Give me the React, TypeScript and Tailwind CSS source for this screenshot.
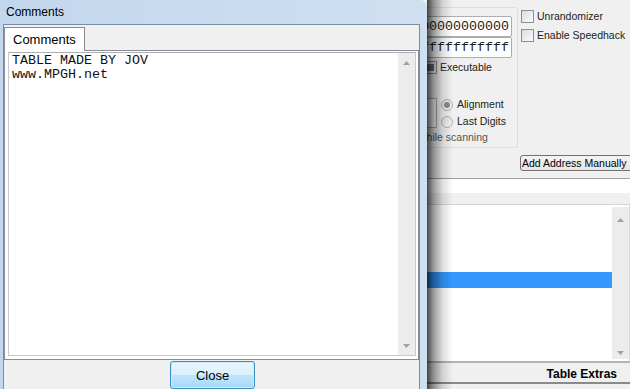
import React from "react";

function Arrow({ down }: { down?: boolean }) {
  return (
    <svg width="7" height="4" viewBox="0 0 7 4" className="block">
      <polygon points={down ? "0,0 7,0 3.5,4" : "0,4 7,4 3.5,0"} fill="#a2a2a2" />
    </svg>
  );
}

function CheckBox({ gray }: { gray?: boolean }) {
  return (
    <div className="w-[13px] h-[13px] shrink-0 border border-[#8f8f8f] bg-[linear-gradient(135deg,#dcdcdc,#fbfbfb)] flex items-center justify-center">
      {gray ? <div className="w-[7px] h-[7px] bg-[#6f6f6f]" /> : null}
    </div>
  );
}

function Radio({ checked }: { checked?: boolean }) {
  return (
    <div className="w-[12px] h-[12px] shrink-0 rounded-full border border-[#b0b0b0] bg-[linear-gradient(135deg,#e2e2e2,#fafafa)] flex items-center justify-center">
      {checked ? <div className="w-[6px] h-[6px] rounded-full bg-[#8c8c8c]" /> : null}
    </div>
  );
}

export default function App() {
  return (
    <div className="relative w-[630px] h-[389px] overflow-hidden bg-[#f0f0f0] font-['Liberation_Sans',Arial,sans-serif] text-black">
      {/* Background main window */}
      <div className="flex flex-col w-[630px] h-[389px]">
        <div className="h-[178px] flex shrink-0">
          <div className="w-[518px] shrink-0 pl-[380px] pt-[7px]">
            <div className="h-[141px] border border-[#d5dfe5] rounded-[3px] flex flex-col">
              <div className="mt-[8px] self-end mr-[5px] w-[120px] h-[21px] border border-[#abadb3] rounded-[2px] bg-white flex items-center justify-end pr-[2px] overflow-hidden font-['Liberation_Mono',monospace] text-[13.33px] leading-[13px] text-[#222]">
                <span className="whitespace-nowrap">0000000000000000</span>
              </div>
              <div className="self-end mr-[5px] w-[120px] h-[21px] border border-[#abadb3] rounded-[2px] bg-white flex items-center justify-end pr-[2px] overflow-hidden font-['Liberation_Mono',monospace] text-[13.33px] leading-[13px] text-[#222]">
                <span className="whitespace-nowrap">7fffffffffffffff</span>
              </div>
              <div className="mt-[3px] h-[13px] flex items-center pl-[43px] gap-[3px] text-[10.5px] leading-[13px] text-[#222]">
                <CheckBox gray />
                <span className="whitespace-nowrap">Executable</span>
              </div>
              <div className="mt-[22px] flex">
                <div className="ml-[19px] mt-[2px] w-[37px] h-[30px] border border-[#abadb3] bg-white" />
                <div className="ml-[4px] flex flex-col text-[10.5px] leading-[13px] text-[#222]">
                  <div className="h-[17px] flex items-center gap-[4px]">
                    <Radio checked />
                    <span className="whitespace-nowrap">Alignment</span>
                  </div>
                  <div className="h-[17px] flex items-center gap-[4px]">
                    <Radio />
                    <span className="whitespace-nowrap">Last Digits</span>
                  </div>
                </div>
              </div>
              <div className="ml-[38px] mt-[1px] text-[10.5px] leading-[13px] text-[#555] whitespace-nowrap">while scanning</div>
            </div>
          </div>
          <div className="flex-1 flex flex-col pl-[3px] pt-[10px] text-[10.5px] leading-[13px] text-[#222]">
            <div className="h-[13px] flex items-center gap-[3px]">
              <CheckBox />
              <span className="whitespace-nowrap">Unrandomizer</span>
            </div>
            <div className="mt-[6px] h-[13px] flex items-center gap-[3px]">
              <CheckBox />
              <span className="whitespace-nowrap">Enable Speedhack</span>
            </div>
            <div className="mt-auto mb-[7px] ml-[-1px] h-[16px] w-[120px] border border-[#707070] rounded-[3px] bg-[linear-gradient(#f4f4f4,#e6e6e6)] pl-[1px] flex items-center text-black whitespace-nowrap">
              Add Address Manually
            </div>
          </div>
        </div>
        <div className="h-[27px] shrink-0 border-t border-t-[#a0a0a0] border-b border-b-[#d5d5d5] flex flex-col">
          <div className="h-[14px] bg-white" />
          <div className="h-[11px] bg-[#f0f0f0]" />
        </div>
        <div className="h-[156px] shrink-0 flex bg-white">
          <div className="flex-1 flex flex-col">
            <div className="mt-[67px] h-[16px] bg-[#3399ff]" />
          </div>
          <div className="w-[17px] my-[2px] bg-[#ececec] flex flex-col justify-between items-center pt-[11px] pb-[4px]">
            <Arrow />
            <Arrow down />
          </div>
          <div className="w-[1px] bg-[#dcdcdc]" />
        </div>
        <div className="h-[2px] shrink-0 bg-[#b4b4b4]" />
        <div className="h-[19px] shrink-0 flex items-center justify-end pr-[13px] text-[12px] leading-[14px] font-bold pt-[2px]">
          Table Extras
        </div>
        <div className="h-[2px] shrink-0 bg-[#8a8a8a]" />
        <div className="flex-1 bg-[#f0f0f0]" />
      </div>

      {/* Drop shadow of the dialog */}
      <div className="absolute left-[427px] top-0 w-[26px] h-[389px] pointer-events-none bg-[linear-gradient(to_right,rgba(0,0,0,0.72),rgba(0,0,0,0.4)_25%,rgba(0,0,0,0.13)_60%,rgba(0,0,0,0))]" />

      {/* Comments dialog */}
      <div className="absolute left-0 top-0 w-[427px] h-[420px] bg-[linear-gradient(to_right,#c2d6ed,#cfe0f2)] rounded-tr-[7px] flex flex-col">
        <div className="h-[24px] shrink-0 flex items-center pl-[6px] text-[12px] leading-[14px]">Comments</div>
        <div className="flex-1 ml-[3px] mr-[7px] border-x border-t border-[#7a8ca1] bg-[#f0f0f0] flex flex-col">
          <div className="pt-[2px] h-[25px] shrink-0 flex">
            <div className="relative z-10 w-[81px] h-[24px] border-l border-t border-r border-[#898c95] bg-white pl-[8px] flex items-center text-[13px] leading-[15px]">
              Comments
            </div>
          </div>
          <div className="h-[310px] shrink-0 border border-[#898c95] bg-white pt-[1px] pl-[3px] pr-[2px]">
            <div className="h-[304px] border border-[#c3ccd6] border-t-[#abadb3] flex">
              <div className="flex-1 pl-[3px] pt-[1px] font-['Liberation_Mono',monospace] text-[13.33px] leading-[14px] whitespace-pre text-[#111]">
                <div>TABLE MADE BY JOV</div>
                <div>www.MPGH.net</div>
              </div>
              <div className="w-[17px] bg-[#ececec] flex flex-col justify-between items-center pt-[8px] pb-[7px]">
                <Arrow />
                <Arrow down />
              </div>
            </div>
          </div>
          <div className="mt-[1px] ml-[166px] w-[85px] h-[28px] shrink-0 border border-[#3c8fc4] rounded-[3px] shadow-[inset_0_0_0_1px_#c8eefd] bg-[linear-gradient(#eaf6fd,#d9f0fc_50%,#bee6fd_50%,#a7d9f5)] flex items-center justify-center text-[13px] leading-[15px]">
            Close
          </div>
        </div>
      </div>
    </div>
  );
}
